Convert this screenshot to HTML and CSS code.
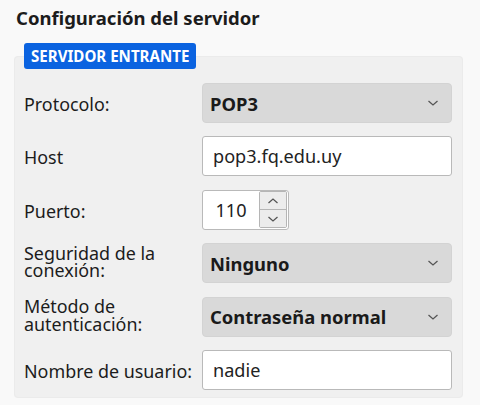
FILE: index.html
```html
<!DOCTYPE html>
<html lang="es">
<head>
<meta charset="utf-8">
<link rel="stylesheet" href="styles.css">
</head>
<body>
<div class="title">Configuración del servidor</div>
<fieldset class="panel">
  <legend class="badge">SERVIDOR ENTRANTE</legend>
  <div class="grid">
    <div class="label">Protocolo:</div>
    <div class="select"><span>POP3</span><svg class="chev" width="12" height="8" viewBox="0 0 12 8"><path d="M1.5 2 L6 6 L10.5 2" fill="none" stroke="#555" stroke-width="1.3"/></svg></div>

    <div class="label">Host</div>
    <div class="input">pop3.fq.edu.uy</div>

    <div class="label">Puerto:</div>
    <div class="port">
      <div class="port-val">110</div>
      <div class="spin">
        <div class="spin-btn"><svg width="12" height="8" viewBox="0 0 12 8"><path d="M1.5 6 L6 2 L10.5 6" fill="none" stroke="#555" stroke-width="1.3"/></svg></div>
        <div class="spin-btn"><svg width="12" height="8" viewBox="0 0 12 8"><path d="M1.5 2 L6 6 L10.5 2" fill="none" stroke="#555" stroke-width="1.3"/></svg></div>
      </div>
    </div>

    <div class="label two">Seguridad de la<br>conexión:</div>
    <div class="select"><span>Ninguno</span><svg class="chev" width="12" height="8" viewBox="0 0 12 8"><path d="M1.5 2 L6 6 L10.5 2" fill="none" stroke="#555" stroke-width="1.3"/></svg></div>

    <div class="label two">Método de<br>autenticación:</div>
    <div class="select"><span>Contraseña normal</span><svg class="chev" width="12" height="8" viewBox="0 0 12 8"><path d="M1.5 2 L6 6 L10.5 2" fill="none" stroke="#555" stroke-width="1.3"/></svg></div>

    <div class="label">Nombre de usuario:</div>
    <div class="input">nadie</div>
  </div>
</fieldset>
</body>
</html>
```

FILE: styles.css
```css
html, body {
  margin: 0;
  padding: 0;
  background: #f9f9f9;
  font-family: "Noto Sans", "Open Sans", sans-serif;
  color: #1c1c1c;
}

.title {
  font-size: 18.5px;
  font-weight: 700;
  line-height: 24px;
  padding: 6px 0 0 16px;
  margin-bottom: 13px;
}

.panel {
  margin: 0 0 0 14px;
  width: 449px;
  box-sizing: border-box;
  border: 1px solid #ebebeb;
  border-radius: 4px;
  background: #f0f0f0;
  padding: 14px 10px 7px 9px;
  min-inline-size: 0;
}

.badge {
  background: #0b63e0;
  color: #fff;
  font-size: 15.1px;
  font-weight: 700;
  line-height: 26px;
  height: 26px;
  padding: 0 7px;
  border-radius: 3px;
}

.grid {
  display: grid;
  grid-template-columns: 178px 250px;
  grid-auto-rows: 40px;
  row-gap: 13.4px;
  align-items: center;
}

.label {
  font-size: 17.9px;
  line-height: 22px;
  padding-top: 2px;
  white-space: nowrap;
}

.label.two {
  line-height: 17.5px;
  padding-top: 0;
  padding-bottom: 2px;
}

.select {
  height: 40px;
  box-sizing: border-box;
  background: #d9d9d9;
  border: 1px solid #d3d3d3;
  border-radius: 4px;
  display: flex;
  align-items: center;
  justify-content: space-between;
  padding: 0 12px 0 7px;
  font-size: 18.4px;
  font-weight: 700;
  color: #1a1a1a;
}

.chev {
  display: block;
}

.input {
  height: 40px;
  box-sizing: border-box;
  background: #fff;
  border: 1px solid #b9b9b9;
  border-radius: 3px;
  display: flex;
  align-items: center;
  padding: 0 10px;
  font-size: 18.1px;
  color: #222;
}

.port {
  width: 87px;
  height: 40px;
  box-sizing: border-box;
  background: #fff;
  border: 1px solid #b9b9b9;
  border-radius: 3px;
  display: flex;
  align-items: center;
  padding-right: 1px;
}

.port-val {
  flex: 1;
  text-align: center;
  font-size: 18.1px;
  color: #222;
}

.spin {
  width: 28px;
  height: 37px;
  display: flex;
  flex-direction: column;
  border: 1px solid #b5b5b5;
  box-sizing: border-box;
  border-radius: 2px;
  overflow: hidden;
}

.spin-btn {
  flex: 1;
  background: #ececec;
  display: flex;
  align-items: center;
  justify-content: center;
}

.spin-btn + .spin-btn {
  border-top: 1px solid #b5b5b5;
}
```
